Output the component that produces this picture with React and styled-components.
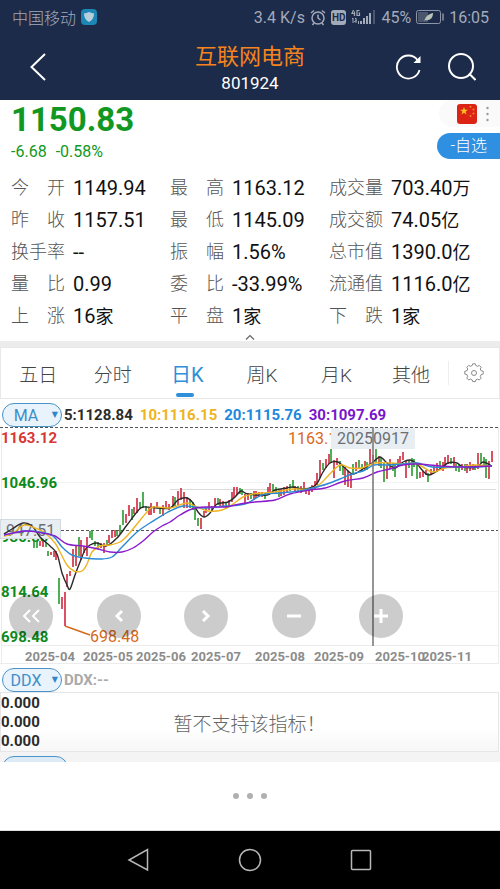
import { useState } from 'react';
import styled, { createGlobalStyle, css } from 'styled-components';

const stats = [
  ['今开', '1149.94', ''],
  ['最高', '1163.12', ''],
  ['成交量', '703.40', '万'],
  ['昨收', '1157.51', ''],
  ['最低', '1145.09', ''],
  ['成交额', '74.05', '亿'],
  ['换手率', '--', ''],
  ['振幅', '1.56%', ''],
  ['总市值', '1390.0', '亿'],
  ['量比', '0.99', ''],
  ['委比', '-33.99%', ''],
  ['流通值', '1116.0', '亿'],
  ['上涨', '16', '家'],
  ['平盘', '1', '家'],
  ['下跌', '1', '家'],
];

const periods = ['五日', '分时', '日K', '周K', '月K', '其他'];

const averages = [
  { label: '5:1128.84', color: '#2b2b2b' },
  { label: '10:1116.15', color: '#eeb422' },
  { label: '20:1115.76', color: '#1e88dc' },
  { label: '30:1097.69', color: '#7a14cc' },
];

const months = [
  ['2025-04', 25],
  ['2025-05', 83],
  ['2025-06', 136],
  ['2025-07', 191],
  ['2025-08', 255],
  ['2025-09', 314],
  ['2025-10', 375],
  ['2025-11', 422],
];

// x, top, bottom, direction
const candles = `34 114 121 g,37 114 121 g,40 114 119 r,43 114 120 r,46 115 120 g,48 124 129 g,51 125 128 r,54 124 130 r,
56 124 133 r,59 151 177 g,62 170 182 r,65 165 199 r,67 147 160 r,70 144 149 r,73 122 140 r,76 119 139 r,79 110 129 g,
81 113 133 r,84 119 126 r,87 110 129 r,90 104 111 g,92 103 113 g,95 114 119 g,98 115 122 g,101 116 121 r,104 116 126 r,
107 113 118 g,109 108 116 r,112 104 111 r,115 103 110 r,117 104 109 g,120 98 107 g,123 83 98 g,126 87 96 r,129 78 89 r,
132 82 93 g,134 80 87 r,137 71 86 r,140 75 81 g,143 65 81 g,146 79 84 g,149 81 88 r,151 76 88 r,154 79 86 r,157 75 81 r,
160 80 87 g,163 78 89 r,166 74 82 r,169 77 83 r,173 69 80 r,175 70 79 g,178 64 78 r,181 61 73 r,184 65 81 r,187 70 81 r,
190 72 81 g,193 75 83 g,195 81 93 g,198 91 99 g,201 91 102 r,204 84 90 r,206 81 86 r,209 75 83 r,212 79 85 r,215 71 81 r,
218 71 78 g,220 72 79 r,223 74 80 r,226 75 81 g,229 73 80 r,232 65 75 r,234 60 71 r,237 60 68 r,240 61 67 g,242 62 68 g,
245 67 76 r,248 66 73 r,251 66 72 g,254 64 73 r,256 64 71 r,259 65 70 r,262 65 70 r,265 66 72 g,268 60 68 r,270 56 65 r,
273 57 64 g,276 60 67 g,279 62 70 g,281 62 69 r,284 60 68 r,287 59 66 r,290 57 64 g,293 53 61 g,295 59 65 r,298 59 65 g,
301 59 66 r,304 55 64 r,306 61 67 r,309 62 68 r,312 58 65 r,315 54 62 r,317 46 58 r,320 33 51 r,323 36 43 g,326 32 41 r,
329 27 37 r,331 22 36 g,334 33 51 r,337 31 38 r,340 34 44 g,343 39 48 g,345 40 58 r,348 44 60 r,351 48 61 r,353 37 47 g,
356 35 44 r,359 33 42 g,362 37 45 g,365 34 43 r,367 35 43 g,370 22 37 r,373 28 37 r,376 22 36 g,379 29 39 r,381 30 41 g,
384 36 55 g,387 38 52 r,390 32 42 r,393 36 44 g,395 36 50 g,398 32 40 r,400 29 37 r,403 25 33 r,406 34 51 r,409 33 41 g,
412 31 49 g,414 32 40 g,417 36 52 g,420 45 51 r,423 44 50 r,426 43 48 r,428 46 55 g,431 42 48 r,434 38 46 r,437 36 45 r,
440 34 42 g,443 35 44 r,445 30 41 r,448 28 37 r,451 31 37 g,454 30 39 r,456 37 44 g,459 37 45 g,462 37 43 r,465 37 44 g,
467 37 46 r,470 35 44 r,473 37 43 r,475 38 43 g,478 26 42 r,481 26 36 g,484 30 38 g,486 32 51 g,489 34 52 r,492 24 35 r`
  .split(',')
  .map((row) => row.trim().split(' '));

const ma5 = [
  4, 107, 12, 102, 23, 96, 32, 99, 40, 110, 50, 119, 57, 127, 62, 146, 67, 158, 70, 162, 75, 148, 80, 135, 85, 123, 90, 118,
  97, 116, 106, 119, 117, 111, 127, 98, 137, 85, 143, 80, 157, 81, 170, 81, 178, 73, 187, 71, 193, 76, 198, 85, 204, 90,
  210, 86, 217, 77, 228, 75, 235, 70, 241, 64, 248, 67, 267, 68, 275, 63, 287, 61, 293, 60, 303, 62, 313, 60, 318, 55,
  323, 45, 330, 36, 338, 35, 345, 41, 353, 47, 363, 42, 372, 36, 380, 30, 387, 36, 395, 41, 403, 35, 410, 33, 417, 37,
  423, 44, 429, 48, 440, 42, 448, 36, 457, 36, 463, 40, 477, 40, 483, 35, 492, 39,
];
const ma10 = [
  4, 109, 12, 107, 24, 98, 35, 101, 45, 106, 55, 116, 60, 125, 67, 138, 74, 144, 82, 144, 87, 137, 92, 125, 100, 119,
  110, 118, 120, 115, 127, 109, 137, 97, 147, 85, 153, 80, 170, 81, 177, 79, 187, 76, 197, 80, 208, 84, 222, 83, 233, 77,
  243, 70, 253, 67, 262, 66, 275, 65, 293, 62, 310, 62, 320, 57, 328, 49, 340, 38, 350, 41, 362, 41, 375, 36, 392, 36,
  403, 37, 415, 36, 423, 40, 433, 45, 445, 41, 460, 40, 475, 38, 492, 39,
];
const ma20 = [
  4, 108, 25, 104, 40, 105, 53, 109, 62, 120, 72, 128, 85, 131, 100, 132, 112, 130, 122, 120, 137, 105, 150, 96, 163, 88,
  170, 84, 183, 79, 195, 80, 207, 81, 225, 79, 245, 77, 262, 68, 280, 66, 300, 64, 313, 61, 327, 57, 340, 52, 352, 47,
  363, 44, 374, 38, 387, 38, 403, 37, 417, 36, 432, 40, 450, 40, 475, 40, 492, 39,
];
const ma30 = [
  4, 108, 25, 104, 42, 106, 55, 109, 67, 117, 83, 119, 98, 122, 110, 125, 122, 125, 133, 121, 143, 114, 153, 105, 162, 99,
  170, 95, 180, 88, 192, 82, 205, 80, 225, 80, 240, 77, 255, 75, 275, 73, 290, 67, 310, 63, 325, 61, 345, 54, 363, 51,
  377, 45, 390, 42, 403, 38, 417, 37, 440, 39, 463, 40, 492, 39,
];

// smooth path through a flat list of x, y pairs
function curve(values) {
  const pts = [];
  for (let i = 0; i < values.length; i += 2) pts.push([values[i], values[i + 1]]);
  let d = `M${pts[0][0]} ${pts[0][1]}`;
  for (let i = 0; i < pts.length - 1; i++) {
    const a = pts[i - 1] || pts[i];
    const b = pts[i];
    const c = pts[i + 1];
    const e = pts[i + 2] || c;
    d += `C${b[0] + (c[0] - a[0]) / 6} ${b[1] + (c[1] - a[1]) / 6} ${c[0] - (e[0] - b[0]) / 6} ${c[1] - (e[1] - b[1]) / 6} ${c[0]} ${c[1]}`;
  }
  return d;
}

function KLineChart() {
  return (
    <ChartSvg viewBox="0 0 500 237" role="img" aria-label="日K">
      <g stroke="#ececec">
        <path d="M1.5 0V237" />
        <path d="M498.5 0V237" />
        <path d="M2 55.5H498M2 164.5H498" stroke="#f4f4f4" />
        <path d="M2 218.5H498M0 236.5H498" />
        <path d="M170 62.5H496" stroke="#dcdcdc" />
      </g>
      <AxisText x="1" y="115" fill="#0c8a1c">930.80</AxisText>
      <rect x="0.5" y="92.5" width="60" height="19" fill="#e9eef3" stroke="#d3dae0" />
      <TagText x="6" y="109" fill="#6b7075">947.51</TagText>
      <path d="M0 0.5H498M61 103.5H498" stroke="#555" strokeDasharray="3 2" />
      {candles.map(([x, top, bottom, dir]) => (
        <path key={x} d={`M${x} ${top}V${bottom}`} stroke={dir === 'r' ? '#d0263c' : '#259a2c'} strokeWidth="1.6" />
      ))}
      <g fill="none" strokeWidth="1.4">
        <path d={curve(ma5)} stroke="#2a2a2a" />
        <path d={curve(ma10)} stroke="#eeb422" />
        <path d={curve(ma20)} stroke="#2b8ad6" />
        <path d={curve(ma30)} stroke="#8a1ccc" />
      </g>
      <AxisText x="1" y="16" fill="#d93636">1163.12</AxisText>
      <AxisText x="1" y="61" fill="#0c8a1c">1046.96</AxisText>
      <AxisText x="1" y="170" fill="#0c8a1c">814.64</AxisText>
      <AxisText x="1" y="215" fill="#0c8a1c">698.48</AxisText>
      <TagText x="288" y="17" fill="#d5691c">1163.12</TagText>
      <path d="M65 199L90 208" stroke="#d5691c" strokeWidth="1.4" />
      <TagText x="90" y="215" fill="#d5691c">698.48</TagText>
      <rect x="331" y="1" width="84" height="21" fill="#e9eef3" />
      <TagText x="337" y="17" fill="#6b7075">20250917</TagText>
      <path d="M373 0V219" stroke="#7c7c7c" strokeWidth="1.6" />
      {months.map(([month, x]) => (
        <MonthText key={month} x={x} y="234">{month}</MonthText>
      ))}
    </ChartSvg>
  );
}

function StatusBar() {
  return (
    <Status>
      <Carrier>中国移动</Carrier>
      <svg width="16" height="16" viewBox="0 0 16 16">
        <rect width="16" height="16" rx="4" fill="#1c86b4" />
        <path d="M8 3c2 1 3 1.300 5 1.300 0 4.200-1.500 7-5 8.700-3.500-1.700-5-4.500-5-8.700C5 4.300 6 4 8 3z" fill="#b7cfdc" />
      </svg>
      <Spacer />
      <span>3.4 K/s</span>
      <svg width="16" height="17" viewBox="0 0 16 17" fill="none" stroke="#a3aaba" strokeWidth="1.5">
        <circle cx="8" cy="9" r="6" />
        <path d="M8 5.500V9l2.500 2M1 4l3-2.500M15 4l-3-2.500M4 14l-1.500 2M12 14l1.500 2" />
      </svg>
      <Hd>HD</Hd>
      <svg width="25" height="16" viewBox="0 0 25 16" fill="none" stroke="#a3aaba">
        <path d="M2.500 1L1 4.500H4M3.500 2.500V7M8.500 1.500H6V6.500H8.500V4H7.500" strokeWidth="1.2" />
        <path d="M1 10l1-1v5M4 10l1-1v5M3 13l3-2M7.500 15v-3" />
        <path d="M10 15v-3M13 15V9M16 15V7M19 15V4" strokeWidth="2" />
        <path d="M23 15V1" stroke="#77809a" />
      </svg>
      <span>45%</span>
      <svg width="28" height="14" viewBox="0 0 28 14" fill="none" stroke="#8d95a8">
        <rect x="0.5" y="0.5" width="24" height="13" rx="2" />
        <path d="M2 2h10v10H2z" fill="#49566c" stroke="none" />
        <path d="M27 3.500v7" strokeWidth="1.5" />
        <path d="M8 12c1-5 4-8 9-9 0 5-3 8-8 7z" fill="#b9c3b8" stroke="none" />
      </svg>
      <span>16:05</span>
    </Status>
  );
}

export default function App() {
  const [period, setPeriod] = useState('日K');

  return (
    <Page>
      <GlobalStyle />
      <Top>
        <StatusBar />
        <Header>
          <BackButton aria-label="返回">
            <svg width="16" height="28" viewBox="0 0 16 28" fill="none" stroke="#fff" strokeWidth="2">
              <path d="M15 1L1.500 14 15 27" />
            </svg>
          </BackButton>
          <Titles>
            <Title>互联网电商</Title>
            <Code>801924</Code>
          </Titles>
          <Actions>
            <IconButton aria-label="刷新">
              <svg width="26" height="26" viewBox="0 0 26 26" fill="none" stroke="#fff" strokeWidth="1.800">
                <path d="M24.500 16A11.500 11.500 0 1 1 22.500 6" />
                <path d="M25.500 2v7h-7z" fill="#fff" stroke="none" />
              </svg>
            </IconButton>
            <IconButton aria-label="搜索">
              <svg width="28" height="28" viewBox="0 0 28 28" fill="none" stroke="#fff" strokeWidth="2">
                <circle cx="13" cy="13" r="12" />
                <path d="M21 20.500l6.500 6.500" />
              </svg>
            </IconButton>
          </Actions>
        </Header>
      </Top>

      <Quote>
        <QuoteHead>
          <div>
            <Price>1150.83</Price>
            <Change>
              <span>-6.68</span>
              <span>-0.58%</span>
            </Change>
          </div>
          <QuoteSide>
            <MarketButton aria-label="市场">
              <svg width="20" height="20" viewBox="0 0 20 20">
                <rect width="20" height="20" rx="3" fill="#dc2415" />
                <path d="M7 3l1 2.800h3L8.600 7.500l.9 2.900L7 8.700l-2.500 1.700.9-2.900L3 5.800h3z" fill="#fbc41e" />
                <g fill="#f0892a">
                  <circle cx="13.500" cy="2.800" r="1" />
                  <circle cx="16.500" cy="5.500" r="1" />
                  <circle cx="16.500" cy="9.500" r="1" />
                  <circle cx="13.500" cy="12" r="1" />
                </g>
              </svg>
              <svg width="3" height="16" viewBox="0 0 3 16" fill="#999">
                <circle cx="1.500" cy="2" r="1.200" />
                <circle cx="1.500" cy="8" r="1.200" />
                <circle cx="1.500" cy="14" r="1.200" />
              </svg>
            </MarketButton>
            <WatchButton>-自选</WatchButton>
          </QuoteSide>
        </QuoteHead>
        <Stats>
          {stats.map(([label, value, unit]) => (
            <Stat key={label}>
              <StatLabel>
                {[...label].map((char) => (
                  <span key={char}>{char}</span>
                ))}
              </StatLabel>
              <StatValue>
                {value}
                {unit && <Unit>{unit}</Unit>}
              </StatValue>
            </Stat>
          ))}
        </Stats>
        <Collapse aria-label="收起">
          <svg width="10" height="6" viewBox="0 0 10 6" fill="none" stroke="#666" strokeWidth="1.2">
            <path d="M1 5.500L5 1.500 9 5.500" />
          </svg>
        </Collapse>
      </Quote>

      <Tabs>
        {periods.map((name) => (
          <Tab key={name} $active={name === period} onClick={() => setPeriod(name)}>
            {name}
          </Tab>
        ))}
        <SettingsButton aria-label="设置">
          <svg width="20" height="20" viewBox="0 0 20 20" fill="none" stroke="#8a8a8a" strokeLinejoin="round">
            <path d="M8.200 2.500L8.700.8h2.600l.5 1.700 1.800.8 1.700-.9 1.900 1.900-.9 1.700.7 1.700 2.200.6v2.800l-2.100.5-.8 1.800.9 1.700-1.900 1.900-1.700-.9-1.800.8-.5 1.700H8.700l-.5-1.700-1.800-.8-1.700.9-1.900-1.900.9-1.700-.8-1.800-2.100-.5V8.300L3 7.700 3.700 6l-.9-1.700 1.900-1.900 1.700.9z" />
            <circle cx="10" cy="10" r="2.500" />
          </svg>
        </SettingsButton>
      </Tabs>

      <IndicatorRow>
        <Picker>
          <PickerSelect aria-label="主图指标">
            <option>MA</option>
            <option>BOLL</option>
          </PickerSelect>
          <PickerArrow>▼</PickerArrow>
        </Picker>
        <Legends>
          {averages.map(({ label, color }) => (
            <Legend key={label} $color={color}>{label}</Legend>
          ))}
        </Legends>
      </IndicatorRow>

      <ChartArea>
        <KLineChart />
        <ChartControls>
          <RoundButton aria-label="最早">
            <svg viewBox="0 0 20 20"><path d="M9 4l-6 6 6 6M18 4l-6 6 6 6" strokeWidth="2" /></svg>
          </RoundButton>
          <RoundButton aria-label="向前">
            <svg viewBox="0 0 20 20"><path d="M13 5l-5 5 5 5" /></svg>
          </RoundButton>
          <RoundButton aria-label="向后">
            <svg viewBox="0 0 20 20"><path d="M7 5l5 5-5 5" /></svg>
          </RoundButton>
          <RoundButton aria-label="缩小">
            <svg viewBox="0 0 20 20"><path d="M3 10h14" /></svg>
          </RoundButton>
          <RoundButton aria-label="放大">
            <svg viewBox="0 0 20 20"><path d="M3 10h14M10 3v14" /></svg>
          </RoundButton>
        </ChartControls>
      </ChartArea>

      <IndicatorRow>
        <Picker>
          <PickerSelect aria-label="副图指标">
            <option>DDX</option>
            <option>MACD</option>
          </PickerSelect>
          <PickerArrow>▼</PickerArrow>
        </Picker>
        <Legend $color="#aaa">DDX:--</Legend>
      </IndicatorRow>

      <SubChart>
        <Scale>
          <span>0.000</span>
          <span>0.000</span>
          <span>0.000</span>
        </Scale>
        <Empty>暂不支持该指标！</Empty>
      </SubChart>
      <NextIndicator>
        <NextPill />
      </NextIndicator>

      <Sheet aria-label="更多">
        <Dot />
        <Dot />
        <Dot />
      </Sheet>

      <NavBar>
        <NavButton aria-label="返回键">
          <svg width="24" height="24" viewBox="0 0 24 24"><path d="M20.500 1.500v20.500L2 12z" /></svg>
        </NavButton>
        <NavButton aria-label="主页键">
          <svg width="24" height="24" viewBox="0 0 24 24"><circle cx="12" cy="12" r="10.500" /></svg>
        </NavButton>
        <NavButton aria-label="任务键">
          <svg width="24" height="24" viewBox="0 0 24 24"><rect x="2.500" y="2.500" width="19" height="19" rx="1" /></svg>
        </NavButton>
      </NavBar>
    </Page>
  );
}

const GlobalStyle = createGlobalStyle`
  * {
    box-sizing: border-box;
  }

  body {
    margin: 0;
    background: #fff;
    font-family: Roboto, "Noto Sans CJK SC", sans-serif;
  }

  button {
    padding: 0;
    border: 0;
    background: none;
    color: inherit;
    font: inherit;
    cursor: pointer;
  }

  svg {
    display: block;
    flex: none;
  }
`;

const Page = styled.main`
  display: flex;
  flex-direction: column;
  overflow: hidden;
`;

const Top = styled.div`
  background: #1c2b49;
  color: #fff;
`;

const Status = styled.div`
  display: flex;
  align-items: center;
  gap: 5px;
  height: 34px;
  padding: 0 11px 0 12px;
  color: #a3aaba;
  font-size: 16px;
  white-space: nowrap;
`;

const Carrier = styled.span`
  font-weight: 300;
`;

const Spacer = styled.div`
  flex: 1;
`;

const Hd = styled.span`
  padding: 0 1px;
  border-radius: 3px;
  background: #a3aaba;
  color: #1c2b49;
  font-size: 10px;
  font-weight: 700;
  line-height: 15px;
`;

const Header = styled.header`
  display: grid;
  grid-template-columns: 1fr auto 1fr;
  align-items: center;
  height: 66px;
  padding: 0 24px;
`;

const IconButton = styled.button`
  display: flex;
  align-items: center;
`;

const BackButton = styled(IconButton)`
  padding-left: 6px;
`;

const Titles = styled.div`
  padding-top: 3px;
  text-align: center;
`;

const Title = styled.h1`
  margin: 0;
  color: #f5841f;
  font-size: 22px;
  font-weight: 400;
  line-height: 28px;
`;

const Code = styled.div`
  font-size: 17px;
  line-height: 24px;
`;

const Actions = styled.div`
  display: flex;
  justify-content: flex-end;
  gap: 27px;
`;

const Quote = styled.section`
  border-bottom: 6px solid #ececec;
`;

const QuoteHead = styled.div`
  display: flex;
  justify-content: space-between;
  padding: 0 0 8px 11px;
`;

const Price = styled.div`
  color: #119822;
  font-size: 33px;
  font-weight: 700;
  line-height: 40px;
`;

const Change = styled.div`
  display: flex;
  gap: 9px;
  color: #119822;
  font-size: 16px;
  line-height: 24px;
`;

const QuoteSide = styled.div`
  display: flex;
  flex-direction: column;
  align-items: flex-end;
  gap: 6px;
`;

const MarketButton = styled.button`
  display: flex;
  align-items: center;
  gap: 9px;
  height: 27px;
  padding: 0 11px 0 18px;
  border-radius: 14px 0 0 14px;
  background: #fafafa;
`;

const WatchButton = styled.button`
  height: 26px;
  padding: 0 13px;
  border-radius: 13px 0 0 13px;
  background: #2f8fe0;
  color: #fff;
  font-size: 16px;
  font-weight: 300;
  line-height: 26px;
`;

const Stats = styled.div`
  display: grid;
  grid-template-columns: repeat(3, 1fr);
  padding: 0 12px 0 11px;
`;

const Stat = styled.div`
  display: flex;
  gap: 8px;
  height: 32px;
  line-height: 32px;
  white-space: nowrap;
`;

const StatLabel = styled.div`
  display: flex;
  justify-content: space-between;
  width: 54px;
  color: #555;
  font-size: 18px;
  font-weight: 300;
`;

const StatValue = styled.div`
  color: #111;
  font-size: 20px;
`;

const Unit = styled.span`
  font-size: 18px;
`;

const Collapse = styled.button`
  display: flex;
  justify-content: center;
  align-items: center;
  width: 100%;
  height: 9px;
`;

const Tabs = styled.nav`
  display: flex;
  height: 52px;
  border: 1px solid #e8e8e8;
`;

const Tab = styled.button`
  position: relative;
  flex: 3;
  color: #444;
  font-size: 19px;
  font-weight: 300;

  ${(props) => props.$active && css`
    color: #2f8fd8;
    font-size: 20px;
    font-weight: 400;

    &::after {
      content: '';
      position: absolute;
      left: 50%;
      bottom: 1px;
      width: 18px;
      height: 4px;
      margin-left: -11px;
      border-radius: 2px;
      background: #2f8fd8;
    }
  `}
`;

const SettingsButton = styled.button`
  display: flex;
  justify-content: center;
  align-items: center;
  flex: 2;
  height: 24px;
  margin: auto 0;
  border-left: 1px solid #eee;
`;

const IndicatorRow = styled.div`
  display: flex;
  align-items: center;
  gap: 2px;
  height: 28px;
  padding: 4px 2px 0;
`;

const Picker = styled.div`
  position: relative;
`;

const PickerSelect = styled.select`
  display: block;
  appearance: none;
  width: 60px;
  height: 24px;
  padding: 0 12px 0 0;
  border: 1px solid #4a94cc;
  border-radius: 12px;
  background: #e8f3fb;
  color: #3f8ec9;
  font: 400 16px Roboto, sans-serif;
  text-align: center;
  text-align-last: center;
`;

const PickerArrow = styled.span`
  position: absolute;
  top: 0;
  right: 4px;
  color: #2f86c8;
  font: 8px/24px "DejaVu Sans", sans-serif;
  pointer-events: none;
`;

const Legends = styled.div`
  display: flex;
  gap: 7px;
`;

const Legend = styled.span`
  color: ${(props) => props.$color};
  font-size: 15px;
  font-weight: 700;
  white-space: nowrap;
`;

const ChartArea = styled.div`
  position: relative;
`;

const ChartSvg = styled.svg`
  width: 100%;
  height: auto;
`;

const AxisText = styled.text`
  font-size: 15px;
  font-weight: 700;
`;

const TagText = styled.text`
  font-size: 16px;
`;

const MonthText = styled.text`
  fill: #8c8c8c;
  font-size: 13px;
  font-weight: 700;
`;

const ChartControls = styled.div`
  position: absolute;
  left: 9px;
  right: 97px;
  bottom: 26px;
  display: flex;
  justify-content: space-between;
`;

const RoundButton = styled.button`
  display: flex;
  justify-content: center;
  align-items: center;
  width: 44px;
  height: 44px;
  border-radius: 50%;
  background: rgba(0, 0, 0, 0.2);

  svg {
    width: 20px;
    fill: none;
    stroke: #fff;
    stroke-width: 3;
  }
`;

const SubChart = styled.div`
  display: flex;
  align-items: center;
  margin-right: 1px;
  border: 1px solid #e6e6e6;
  background: linear-gradient(#fff 60%, #f7f7f7);
`;

const Scale = styled.div`
  display: flex;
  flex-direction: column;
  width: 62px;
  padding-top: 1px;
  color: #2b2b2b;
  font-size: 15px;
  font-weight: 700;
  line-height: 19px;
`;

const Empty = styled.div`
  flex: 1;
  padding-right: 62px;
  color: #666;
  font-size: 19px;
  font-weight: 300;
  text-align: center;
`;

const NextIndicator = styled.div`
  height: 10px;
  padding: 4px 2px 0;
  overflow: hidden;
  background: #f4f4f4;
`;

const NextPill = styled.div`
  width: 66px;
  height: 24px;
  border: 1px solid #4a94cc;
  border-radius: 12px;
  background: #dcebf6;
`;

const Sheet = styled.button`
  display: flex;
  justify-content: center;
  align-items: center;
  gap: 8px;
  height: 69px;
  border-bottom: 1px solid #ddd;
  background: #fff;
`;

const Dot = styled.span`
  width: 6px;
  height: 6px;
  border-radius: 50%;
  background: #b0b0b0;
`;

const NavBar = styled.footer`
  display: flex;
  justify-content: center;
  align-items: center;
  gap: 87px;
  height: 58px;
  background: #000;
`;

const NavButton = styled.button`
  svg {
    fill: none;
    stroke: #b8b8b8;
    stroke-width: 1.5;
  }
`;
